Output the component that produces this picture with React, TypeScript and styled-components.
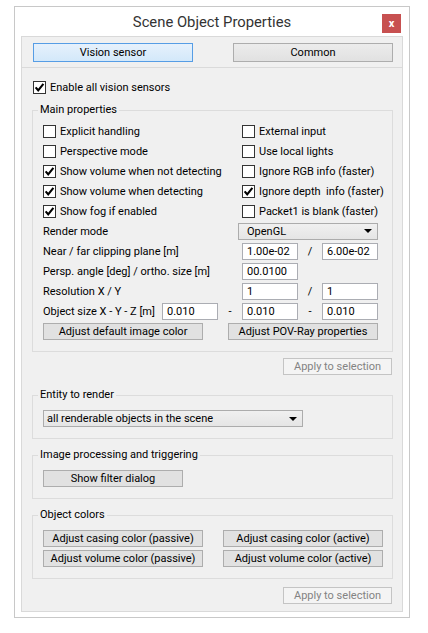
import React from 'react';
import styled, { createGlobalStyle } from 'styled-components';

const GlobalStyle = createGlobalStyle`
  body {
    margin: 0;
    background: #ffffff;
    font-family: Roboto, "Liberation Sans", sans-serif;
    font-size: 11px;
    color: #000000;
  }
`;

const Page = styled.div`
  padding: 6px 0 0 14px;
`;

const Window = styled.div`
  width: 396px;
  box-sizing: border-box;
  border: 1px solid #c8c8c8;
  background: #ffffff;
  padding: 0 6px 5px;
`;

const TitleBar = styled.div`
  height: 29px;
  display: grid;
  grid-template-columns: 1fr auto 1fr;
  align-items: center;
`;

const Title = styled.div`
  grid-column: 2;
  font-size: 14.8px;
  color: #333333;
  padding-top: 1px;
`;

const CloseButton = styled.div`
  grid-column: 3;
  justify-self: end;
  margin: 4px 2px 0 0;
  width: 19px;
  height: 19px;
  background: #c75050;
  color: #ffffff;
  font-weight: bold;
  font-size: 11px;
  display: flex;
  align-items: center;
  justify-content: center;
  line-height: 1;
`;

const Panel = styled.div`
  border: 1px solid #d9d9d9;
  background: #f0f0f0;
`;

const TabRow = styled.div`
  display: flex;
  justify-content: space-between;
  padding: 6px 9px 5px 11px;
  border-bottom: 1px solid #dadada;
`;

const TabButton = styled.div<{ $active?: boolean }>`
  width: 160px;
  height: 19px;
  box-sizing: border-box;
  display: flex;
  align-items: center;
  justify-content: center;
  border: 1px solid ${(p) => (p.$active ? '#569de5' : '#adadad')};
  background: ${(p) =>
    p.$active
      ? 'linear-gradient(#e6f1fc, #d3e8fa)'
      : 'linear-gradient(#ececec, #e1e1e1)'};
`;

const Content = styled.div`
  padding: 9px 9px 7px 10px;
  display: flex;
  flex-direction: column;
`;

const Row = styled.div<{ $indent?: number }>`
  height: 20px;
  display: flex;
  align-items: center;
  white-space: nowrap;
  padding-left: ${(p) => p.$indent ?? 0}px;
`;

const Box = styled.span`
  width: 13px;
  height: 13px;
  box-sizing: border-box;
  border: 1px solid #333333;
  background: #ffffff;
  display: inline-flex;
  align-items: center;
  justify-content: center;
  margin-right: 4px;
  flex-shrink: 0;
`;

const Group = styled.fieldset<{ $top?: number; $padTop?: number }>`
  margin: ${(p) => p.$top ?? 0}px 0 0;
  padding: ${(p) => p.$padTop ?? 3}px 9px 11px 10px;
  border: 1px solid #dcdcdc;
  min-width: 0;
`;

const Legend = styled.legend`
  padding: 0 2px;
  margin-left: -5px;
  line-height: 16px;
`;

const CheckGrid = styled.div`
  display: grid;
  grid-template-columns: 199px 1fr;
`;

const FieldRow = styled.div<{ $cols: string }>`
  height: 20px;
  display: grid;
  grid-template-columns: ${(p) => p.$cols};
  align-items: center;
  white-space: nowrap;
`;

const Sep = styled.span`
  text-align: center;
`;

const Input = styled.div`
  height: 17px;
  box-sizing: border-box;
  border: 1px solid #abadb3;
  background: #ffffff;
  padding-left: 4px;
  display: flex;
  align-items: center;
`;

const Select = styled.div<{ $width: number; $pad?: number }>`
  width: ${(p) => p.$width}px;
  height: 17px;
  box-sizing: border-box;
  border: 1px solid #acacac;
  background: linear-gradient(#f0f0f0, #e5e5e5);
  padding: 0 5px 0 ${(p) => p.$pad ?? 3}px;
  display: flex;
  align-items: center;
  justify-content: space-between;
`;

const Arrow = styled.span`
  width: 0;
  height: 0;
  border-left: 4px solid transparent;
  border-right: 4px solid transparent;
  border-top: 4px solid #000000;
`;

const Button = styled.div<{ $width: number; $disabled?: boolean }>`
  width: ${(p) => p.$width}px;
  height: 17px;
  box-sizing: border-box;
  border: 1px solid ${(p) => (p.$disabled ? '#c4c4c4' : '#adadad')};
  background: ${(p) => (p.$disabled ? '#f4f4f4' : '#e1e1e1')};
  color: ${(p) => (p.$disabled ? '#838383' : '#000000')};
  display: flex;
  align-items: center;
  justify-content: center;
  white-space: nowrap;
`;

const ButtonRow = styled.div<{ $gap: number; $top?: number }>`
  display: flex;
  gap: ${(p) => p.$gap}px;
  margin-top: ${(p) => p.$top ?? 0}px;
`;

const ButtonGrid = styled.div`
  display: grid;
  grid-template-columns: 160px 160px;
  column-gap: 20px;
  row-gap: 3px;
`;

const ApplyRow = styled.div<{ $top: number }>`
  display: flex;
  justify-content: flex-end;
  padding-right: 1px;
  margin-top: ${(p) => p.$top}px;
`;

const Check: React.FC<{ checked?: boolean; label: string }> = ({ checked, label }) => (
  <Row>
    <Box>
      {checked && (
        <svg width="11" height="11" viewBox="0 0 11 11">
          <path d="M1.6 5.4 L4.2 8.3 L9.4 1.9" fill="none" stroke="#000" strokeWidth="2.1" />
        </svg>
      )}
    </Box>
    {label}
  </Row>
);

const checks: [string, boolean][] = [
  ['Explicit handling', false],
  ['External input', false],
  ['Perspective mode', false],
  ['Use local lights', false],
  ['Show volume when not detecting', true],
  ['Ignore RGB info (faster)', false],
  ['Show volume when detecting', true],
  ['Ignore depth\u00a0 info (faster)', true],
  ['Show fog if enabled', true],
  ['Packet1 is blank (faster)', false],
];

const App: React.FC = () => (
  <Page>
    <GlobalStyle />
    <Window>
      <TitleBar>
        <Title>Scene Object Properties</Title>
        <CloseButton>x</CloseButton>
      </TitleBar>
      <Panel>
        <TabRow>
          <TabButton $active>Vision sensor</TabButton>
          <TabButton>Common</TabButton>
        </TabRow>
        <Content>
          <Row $indent={1}>
            <Check checked label="Enable all vision sensors" />
          </Row>
          <Group $top={5}>
            <Legend>Main properties</Legend>
            <CheckGrid>
              {checks.map(([label, checked]) => (
                <Check key={label} label={label} checked={checked} />
              ))}
            </CheckGrid>
            <FieldRow $cols="195px 140px">
              <span>Render mode</span>
              <Select $width={140} $pad={8}>
                OpenGL
                <Arrow />
              </Select>
            </FieldRow>
            <FieldRow $cols="199px 56px 24px 56px">
              <span>Near / far clipping plane [m]</span>
              <Input>1.00e-02</Input>
              <Sep>/</Sep>
              <Input>6.00e-02</Input>
            </FieldRow>
            <FieldRow $cols="199px 56px">
              <span>Persp. angle [deg] / ortho. size [m]</span>
              <Input>00.0100</Input>
            </FieldRow>
            <FieldRow $cols="199px 56px 24px 56px">
              <span>Resolution X / Y</span>
              <Input>1</Input>
              <Sep>/</Sep>
              <Input>1</Input>
            </FieldRow>
            <FieldRow $cols="119px 56px 24px 56px 24px 56px">
              <span>Object size X - Y - Z [m]</span>
              <Input>0.010</Input>
              <Sep>-</Sep>
              <Input>0.010</Input>
              <Sep>-</Sep>
              <Input>0.010</Input>
            </FieldRow>
            <ButtonRow $gap={25} $top={2}>
              <Button $width={160}>Adjust default image color</Button>
              <Button $width={150}>Adjust POV-Ray properties</Button>
            </ButtonRow>
          </Group>
          <ApplyRow $top={6}>
            <Button $width={109} $disabled>
              Apply to selection
            </Button>
          </ApplyRow>
          <Group $top={12} $padTop={7}>
            <Legend>Entity to render</Legend>
            <Select $width={260}>
              all renderable objects in the scene
              <Arrow />
            </Select>
          </Group>
          <Group $top={8} $padTop={7}>
            <Legend>Image processing and triggering</Legend>
            <Button $width={140}>Show filter dialog</Button>
          </Group>
          <Group $top={8} $padTop={7}>
            <Legend>Object colors</Legend>
            <ButtonGrid>
              <Button $width={160}>Adjust casing color (passive)</Button>
              <Button $width={160}>Adjust casing color (active)</Button>
              <Button $width={160}>Adjust volume color (passive)</Button>
              <Button $width={160}>Adjust volume color (active)</Button>
            </ButtonGrid>
          </Group>
          <ApplyRow $top={8}>
            <Button $width={109} $disabled>
              Apply to selection
            </Button>
          </ApplyRow>
        </Content>
      </Panel>
    </Window>
  </Page>
);

export default App;
